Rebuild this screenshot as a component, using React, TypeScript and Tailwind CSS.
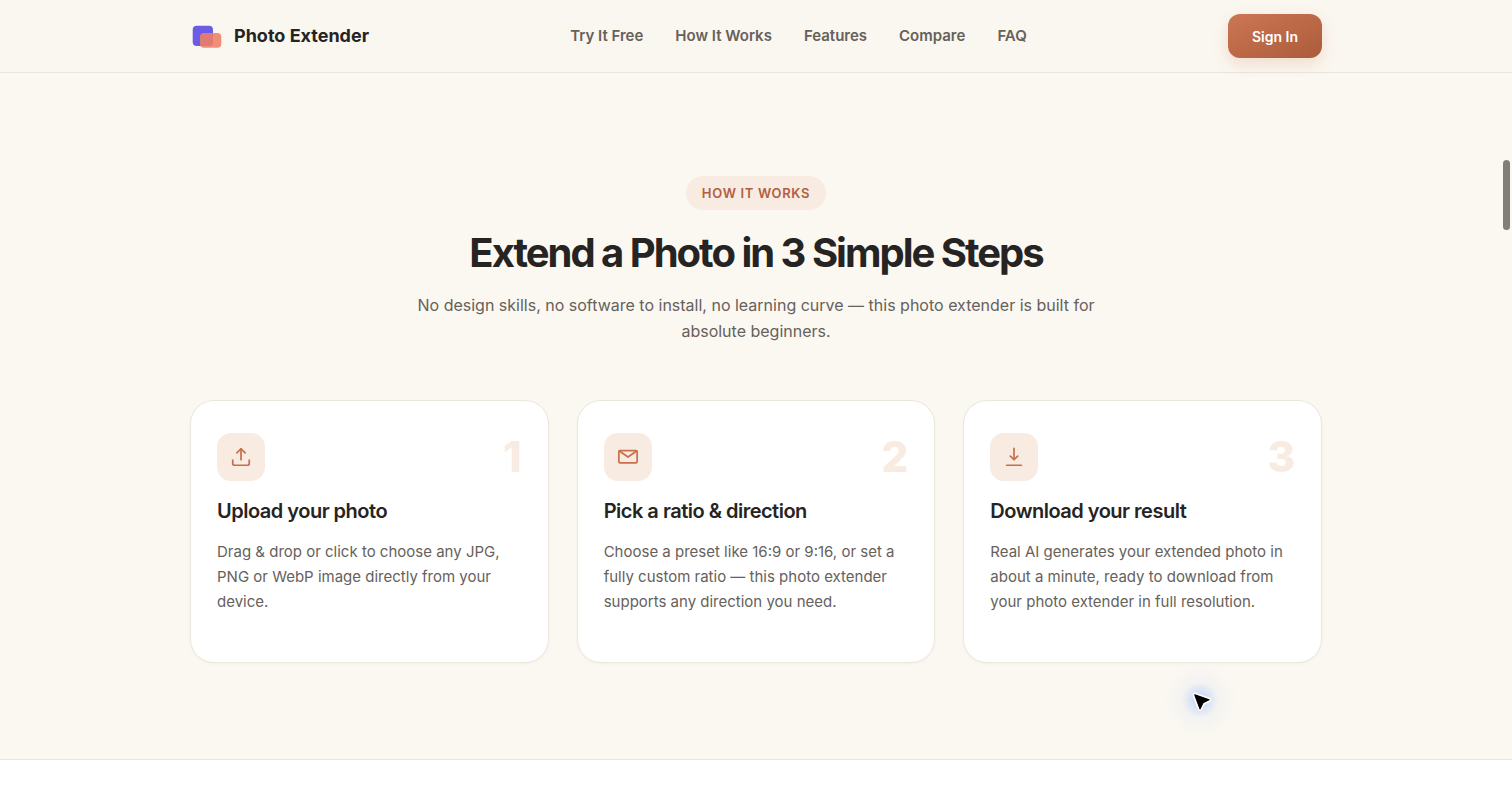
import type { ReactNode } from 'react';

interface Step {
  title: string;
  description: string;
  icon: ReactNode;
}

const navItems = [
  { label: 'Try It Free', href: '#try' },
  { label: 'How It Works', href: '#how-it-works' },
  { label: 'Features', href: '#features' },
  { label: 'Compare', href: '#compare' },
  { label: 'FAQ', href: '#faq' },
];

const steps: Step[] = [
  {
    title: 'Upload your photo',
    description: 'Drag & drop or click to choose any JPG, PNG or WebP image directly from your device.',
    icon: (
      <>
        <path d="M21 15.5V19a2 2 0 0 1-2 2H5a2 2 0 0 1-2-2v-3.5" />
        <path d="m7.5 7.5 4.5-4.5 4.5 4.5" />
        <path d="M12 3v12" />
      </>
    ),
  },
  {
    title: 'Pick a ratio & direction',
    description:
      'Choose a preset like 16:9 or 9:16, or set a fully custom ratio — this photo extender supports any direction you need.',
    icon: (
      <>
        <rect x="2" y="5" width="20" height="13.5" rx="1.5" />
        <path d="m2.5 5.5 9.5 6.5 9.5-6.5" />
      </>
    ),
  },
  {
    title: 'Download your result',
    description:
      'Real AI generates your extended photo in about a minute, ready to download from your photo extender in full resolution.',
    icon: (
      <>
        <path d="M12 2.5v12" />
        <path d="m8 11 4 4 4-4" />
        <path d="M4 21h16" />
      </>
    ),
  },
];

function Logo() {
  return (
    <svg width="32" height="32" viewBox="0 0 32 32" aria-hidden="true">
      <rect x="2.7" y="5.7" width="20.3" height="20.3" rx="4" fill="#6b5ce7" />
      <rect x="10" y="13" width="21.3" height="14.7" rx="4" fill="#f07f63" fillOpacity="0.88" />
    </svg>
  );
}

function Header() {
  return (
    <header className="border-b border-[#e8e5de] bg-[#faf7f0]">
      <div className="mx-auto flex h-18 max-w-[1180px] items-center justify-between px-6">
        <a href="#top" className="flex items-center gap-3 text-lg font-bold text-[#262422]">
          <Logo />
          Photo Extender
        </a>
        <nav className="flex items-center gap-8">
          {navItems.map((item) => (
            <a key={item.href} href={item.href} className="text-[15px] font-semibold text-[#66615b]">
              {item.label}
            </a>
          ))}
        </nav>
        <button
          type="button"
          className="h-11 rounded-xl bg-linear-to-br from-[#cc7654] to-[#ac5c3b] px-6 text-[14px] font-semibold text-white shadow-[0_6px_16px_rgba(204,110,76,0.2)]"
        >
          Sign In
        </button>
      </div>
    </header>
  );
}

function StepCard({ step, number }: { step: Step; number: number }) {
  return (
    <article className="rounded-3xl border border-[#ebe7df] bg-white px-[26px] pt-8 pb-12 shadow-[0_1px_3px_rgba(60,40,20,0.04)]">
      <div className="flex items-center justify-between">
        <div className="flex size-12 items-center justify-center rounded-[14px] bg-[#f8ebe2]">
          <svg
            width="22"
            height="22"
            viewBox="0 0 24 24"
            fill="none"
            stroke="#c96f4c"
            strokeWidth="1.9"
            strokeLinecap="round"
            strokeLinejoin="round"
            aria-hidden="true"
          >
            {step.icon}
          </svg>
        </div>
        <span className="text-[42px] leading-12 font-extrabold text-[#f8ebe2]">{number}</span>
      </div>
      <h3 className="mt-4 text-xl leading-7 font-semibold tracking-tight text-[#262422]">{step.title}</h3>
      <p className="mt-[14px] text-[15px] leading-[25px] text-[#66615b]">{step.description}</p>
    </article>
  );
}

export default function App() {
  return (
    <div id="top" className="min-h-screen bg-white font-[Inter,sans-serif]">
      <Header />

      <main>
        <section id="how-it-works" className="border-b border-[#e8e5de] bg-[#fbf8f2] pt-[103px] pb-24">
          <div className="mx-auto max-w-[1180px] px-6">
            <div className="mx-auto mb-14 flex max-w-[700px] flex-col items-center text-center">
              <span className="rounded-full bg-[#f8ebe2] px-4 py-2 text-[13px] leading-[18px] font-semibold tracking-wider text-[#b1603f] uppercase">
                How It Works
              </span>
              <h2 className="mt-4 text-[40px] leading-[54px] font-bold tracking-tighter text-[#262422]">
                Extend a Photo in 3 Simple Steps
              </h2>
              <p className="mt-3 text-base leading-[26px] text-[#66615b]">
                No design skills, no software to install, no learning curve — this photo extender is built for absolute
                beginners.
              </p>
            </div>

            <div className="grid grid-cols-3 gap-7">
              {steps.map((step, index) => (
                <StepCard key={step.title} step={step} number={index + 1} />
              ))}
            </div>
          </div>
        </section>
      </main>

      {/* Scroll thumb */}
      <div className="fixed top-40 right-0.5 h-[70px] w-[7px] rounded-full bg-[#827f79]" />

      {/* Pointer with glow */}
      <div className="pointer-events-none fixed top-[660px] left-[1160px] size-20 bg-[radial-gradient(circle,rgba(120,165,255,0.45)_0%,rgba(140,180,250,0.28)_18%,rgba(160,185,240,0.07)_32%,transparent_65%)]">
        <svg width="80" height="80" viewBox="0 0 80 80" aria-hidden="true">
          <path
            d="M34.8 34.8 49 39.8 43 42.8 40 48.8Z"
            fill="#000"
            stroke="#fff"
            strokeWidth="4.5"
            strokeLinejoin="round"
            paintOrder="stroke"
          />
          <path
            d="M34.8 34.8 49 39.8 43 42.8 40 48.8Z"
            fill="#000"
            stroke="#000"
            strokeWidth="1.2"
            strokeLinejoin="round"
          />
        </svg>
      </div>
    </div>
  );
}
